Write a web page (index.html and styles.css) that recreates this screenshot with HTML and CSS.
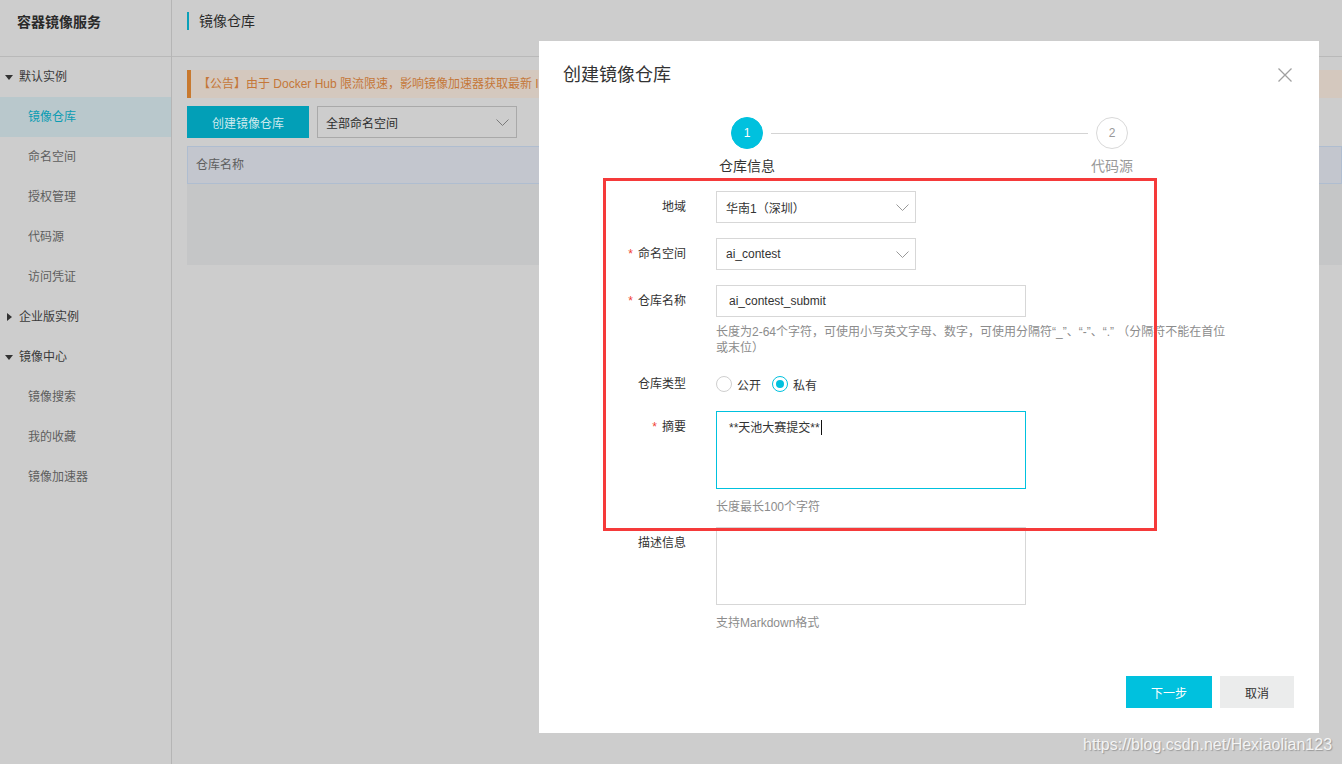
FILE: index.html
```html
<!DOCTYPE html>
<html lang="zh-CN">
<head>
<meta charset="utf-8">
<title>容器镜像服务 - 创建镜像仓库</title>
<link rel="stylesheet" href="styles.css">
</head>
<body>
<div class="app">
  <aside class="sidebar">
    <div class="side-head">容器镜像服务</div>
    <nav class="menu">
      <div class="menu-group"><span class="tri"><span class="tri-down"></span></span>默认实例</div>
      <a class="menu-item active">镜像仓库</a>
      <a class="menu-item">命名空间</a>
      <a class="menu-item">授权管理</a>
      <a class="menu-item">代码源</a>
      <a class="menu-item">访问凭证</a>
      <div class="menu-group"><span class="tri"><span class="tri-right"></span></span>企业版实例</div>
      <div class="menu-group"><span class="tri"><span class="tri-down"></span></span>镜像中心</div>
      <a class="menu-item">镜像搜索</a>
      <a class="menu-item">我的收藏</a>
      <a class="menu-item">镜像加速器</a>
    </nav>
  </aside>
  <main class="main">
    <div class="main-head"><h1 class="page-title">镜像仓库</h1></div>
    <div class="content">
      <div class="notice"><span class="notice-text">【公告】由于 Docker Hub 限流限速，影响镜像加速器获取最新 I</span></div>
      <div class="toolbar">
        <button class="btn-create">创建镜像仓库</button>
        <div class="ns-select">全部命名空间
          <svg class="chev" width="13" height="7" viewBox="0 0 13 7"><polyline points="0.5,0.5 6.5,6.5 12.5,0.5" fill="none" stroke="#7a7a7a" stroke-width="1"/></svg>
        </div>
      </div>
      <div class="table">
        <div class="thead">仓库名称</div>
        <div class="tbody"></div>
      </div>
    </div>
  </main>
</div>

<div class="modal">
  <div class="modal-head">
    <h2 class="modal-title">创建镜像仓库</h2>
    <svg class="close" width="14" height="14" viewBox="0 0 14 14"><path d="M0.5 0.5 L13.5 13.5 M13.5 0.5 L0.5 13.5" stroke="#a0a0a0" stroke-width="1.3" fill="none"/></svg>
  </div>

  <div class="steps">
    <div class="step active">
      <div class="step-num">1</div>
      <div class="step-label">仓库信息</div>
    </div>
    <div class="step-line"></div>
    <div class="step">
      <div class="step-num">2</div>
      <div class="step-label">代码源</div>
    </div>
  </div>

  <div class="form">
    <div class="form-row row-gap">
      <div class="form-label">地域</div>
      <div class="form-ctrl">
        <div class="select">华南1（深圳）
          <svg width="13" height="7" viewBox="0 0 13 7"><polyline points="0.5,0.5 6.5,6.5 12.5,0.5" fill="none" stroke="#999" stroke-width="1"/></svg>
        </div>
      </div>
    </div>
    <div class="form-row row-gap">
      <div class="form-label"><span class="req">*</span>命名空间</div>
      <div class="form-ctrl">
        <div class="select">ai_contest
          <svg width="13" height="7" viewBox="0 0 13 7"><polyline points="0.5,0.5 6.5,6.5 12.5,0.5" fill="none" stroke="#999" stroke-width="1"/></svg>
        </div>
      </div>
    </div>
    <div class="form-row row-help2">
      <div class="form-label"><span class="req">*</span>仓库名称</div>
      <div class="form-ctrl">
        <div class="input">ai_contest_submit</div>
        <div class="help help-2">长度为2-64个字符，可使用小写英文字母、数字，可使用分隔符“_”、“-”、“.” （分隔符不能在首位或末位）</div>
      </div>
    </div>
    <div class="form-row row-radio">
      <div class="form-label">仓库类型</div>
      <div class="form-ctrl radios">
        <label class="radio"><span class="radio-dot"></span>公开</label>
        <label class="radio checked"><span class="radio-dot"><span class="radio-inner"></span></span>私有</label>
      </div>
    </div>
    <div class="form-row row-area">
      <div class="form-label"><span class="req">*</span>摘要</div>
      <div class="form-ctrl">
        <div class="textarea focused">**天池大赛提交**<span class="caret"></span></div>
        <div class="help help-1">长度最长100个字符</div>
      </div>
    </div>
    <div class="form-row">
      <div class="form-label">描述信息</div>
      <div class="form-ctrl">
        <div class="textarea"></div>
        <div class="help help-1">支持Markdown格式</div>
      </div>
    </div>
  </div>

  <div class="modal-foot">
    <button class="btn-primary">下一步</button>
    <button class="btn-default">取消</button>
  </div>

  <div class="annot"></div>
</div>

<div class="watermark">https://blog.csdn.net/Hexiaolian123</div>
</body>
</html>
```

FILE: styles.css
```css
html, body {
  margin: 0;
  padding: 0;
}
body {
  position: relative;
  width: 1342px;
  height: 764px;
  overflow: hidden;
  background: #cdcdcd;
  font-family: "Liberation Sans", "Noto Sans CJK SC", sans-serif;
  font-size: 12px;
  color: #333;
}

/* ---------- background page (dimmed) ---------- */
.app {
  display: flex;
  height: 764px;
}
.sidebar {
  width: 171px;
  flex-shrink: 0;
  border-right: 1px solid #b5b5b5;
}
.side-head {
  height: 57px;
  box-sizing: border-box;
  border-bottom: 1px solid #b9b9b9;
  padding: 12px 0 0 17px;
  font-size: 14px;
  font-weight: bold;
  line-height: 20px;
  color: #2a2a2a;
}
.menu-group {
  display: flex;
  align-items: center;
  height: 40px;
  line-height: 40px;
  padding-left: 5px;
  color: #3a3a3a;
}
.tri {
  width: 8px;
  margin-right: 6px;
  display: flex;
  justify-content: center;
}
.tri-down {
  width: 0;
  height: 0;
  border-left: 4px solid transparent;
  border-right: 4px solid transparent;
  border-top: 5px solid #333;
}
.tri-right {
  width: 0;
  height: 0;
  border-top: 4px solid transparent;
  border-bottom: 4px solid transparent;
  border-left: 5px solid #333;
}
.menu-item {
  display: block;
  height: 40px;
  line-height: 40px;
  padding-left: 28px;
  color: #5e5e5e;
  text-decoration: none;
}
.menu-item.active {
  background: #b9c8cc;
  color: #0b9cb3;
}

.main {
  flex: 1;
  min-width: 0;
}
.main-head {
  height: 57px;
  box-sizing: border-box;
  border-bottom: 1px solid #b9b9b9;
  padding: 12px 0 0 15px;
}
.page-title {
  margin: 0;
  font-size: 14px;
  font-weight: normal;
  line-height: 18px;
  border-left: 2px solid #0aa0b8;
  padding-left: 10px;
  color: #2b2b2b;
}
.content {
  padding: 13px 0 0 15px;
}
.notice {
  height: 28px;
  line-height: 29px;
  background: #d4c8be;
  border-left: 4px solid #c8792f;
  padding-left: 7px;
  color: #c47739;
  margin-bottom: 8px;
}
.notice-text {
  display: block;
  width: 341px;
  white-space: nowrap;
  overflow: hidden;
}
.toolbar {
  display: flex;
  gap: 8px;
  margin-bottom: 8px;
}
.btn-create {
  width: 122px;
  height: 32px;
  border: 0;
  padding: 0;
  background: #029fb7;
  color: #cdeaee;
  font: inherit;
}
.ns-select {
  width: 200px;
  height: 32px;
  box-sizing: border-box;
  border: 1px solid #a9a9a9;
  display: flex;
  align-items: center;
  justify-content: space-between;
  padding: 0 7px 0 8px;
  color: #2e2e2e;
}
.thead {
  height: 38px;
  box-sizing: border-box;
  border: 1px solid #afbdd0;
  background: #c3c6ce;
  padding-left: 8px;
  line-height: 36px;
  color: #5e5e5e;
}
.tbody {
  height: 81px;
  background: #c5c6c7;
}

/* ---------- modal ---------- */
.modal {
  position: absolute;
  left: 539px;
  top: 41px;
  width: 780px;
  height: 692px;
  box-sizing: border-box;
  padding: 22px 25px 0 24px;
  background: #fff;
}
.modal-head {
  display: flex;
  justify-content: space-between;
  align-items: center;
  height: 24px;
}
.modal-title {
  margin: 0;
  font-size: 18px;
  font-weight: normal;
  line-height: 24px;
  color: #333;
}
.close {
  margin-right: 2px;
}

.steps {
  display: flex;
  width: 397px;
  margin: 30px 0 0 168px;
}
.step {
  width: 32px;
  flex-shrink: 0;
  display: flex;
  flex-direction: column;
  align-items: center;
}
.step-num {
  width: 32px;
  height: 32px;
  box-sizing: border-box;
  border-radius: 50%;
  border: 1px solid #d9d9d9;
  display: flex;
  align-items: center;
  justify-content: center;
  font-size: 12px;
  color: #999;
}
.step.active .step-num {
  background: #00c1de;
  border-color: #00c1de;
  color: #fff;
}
.step-label {
  margin-top: 7px;
  line-height: 20px;
  font-size: 14px;
  white-space: nowrap;
  color: #999;
}
.step.active .step-label {
  color: #333;
}
.step-line {
  flex: 1;
  height: 1px;
  background: #d4d4d4;
  margin: 16px 8px 0;
}

.form {
  margin-top: 15px;
}
.form-row {
  display: flex;
}
.row-gap { margin-bottom: 15px; }
.row-help2 { margin-bottom: 12px; }
.row-radio { margin-bottom: 11px; }
.row-area { margin-bottom: 11px; }

.form-label {
  width: 123px;
  flex-shrink: 0;
  margin-right: 30px;
  text-align: right;
  line-height: 32px;
  color: #333;
}
.req {
  color: #f04134;
  margin-right: 5px;
}
.form-ctrl {
  width: 510px;
}
.select {
  width: 200px;
  height: 32px;
  box-sizing: border-box;
  border: 1px solid #d7d7d7;
  display: flex;
  align-items: center;
  justify-content: space-between;
  padding: 0 6px 0 9px;
  color: #333;
}
.input {
  width: 310px;
  height: 32px;
  box-sizing: border-box;
  border: 1px solid #d7d7d7;
  padding: 0 12px;
  line-height: 30px;
  color: #333;
}
.help {
  color: #8c8c8c;
}
.help-2 {
  margin-top: 7px;
  line-height: 16px;
}
.help-1 {
  margin-top: 9px;
  line-height: 18px;
}
.radios {
  display: flex;
  align-items: center;
  height: 32px;
}
.radio {
  display: inline-flex;
  align-items: center;
  margin-right: 11px;
  color: #333;
}
.radio-dot {
  width: 16px;
  height: 16px;
  box-sizing: border-box;
  border-radius: 50%;
  border: 1px solid #cfcfcf;
  margin-right: 5px;
  display: flex;
  align-items: center;
  justify-content: center;
}
.radio.checked .radio-dot {
  border-color: #00c1de;
}
.radio-inner {
  width: 8px;
  height: 8px;
  border-radius: 50%;
  background: #00c1de;
}
.textarea {
  width: 310px;
  height: 78px;
  box-sizing: border-box;
  border: 1px solid #d7d7d7;
  padding: 7px 12px;
  line-height: 18px;
  color: #333;
}
.textarea.focused {
  border-color: #00c1de;
}
.caret {
  display: inline-block;
  width: 1px;
  height: 15px;
  background: #111;
  vertical-align: -3px;
  margin-left: 1px;
}

.modal-foot {
  display: flex;
  justify-content: flex-end;
  gap: 8px;
  margin-top: 44px;
}
.btn-primary,
.btn-default {
  height: 32px;
  border: 0;
  padding: 0;
  font: inherit;
  font-size: 12px;
}
.btn-primary {
  width: 86px;
  background: #00c1de;
  color: #fff;
}
.btn-default {
  width: 74px;
  background: #ebecec;
  color: #333;
}

/* red annotation frame drawn over the screenshot */
.annot {
  position: absolute;
  left: 64px;
  top: 137px;
  width: 554px;
  height: 353px;
  box-sizing: border-box;
  border: 3px solid #f53a3a;
}

.watermark {
  position: absolute;
  left: 1083px;
  top: 735px;
  font-size: 16px;
  line-height: 20px;
  color: rgba(255, 255, 255, 0.85);
  text-shadow: 1px 1px 1px rgba(0, 0, 0, 0.25);
  white-space: nowrap;
}
```
